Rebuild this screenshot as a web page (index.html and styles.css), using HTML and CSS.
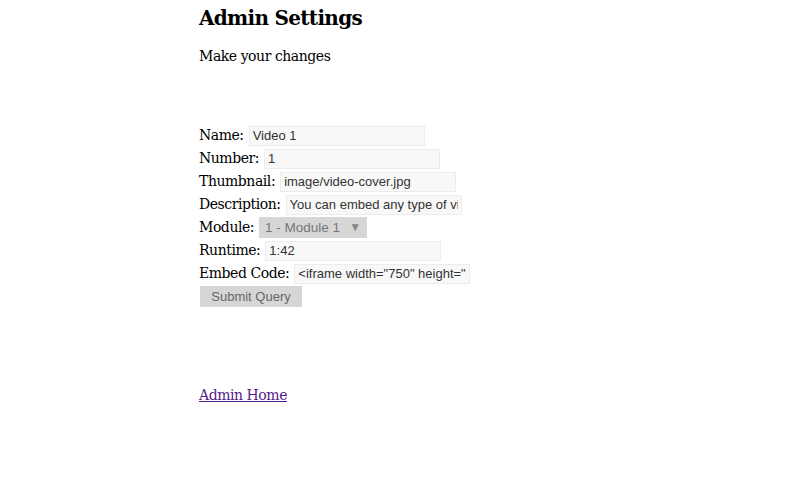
FILE: index.html
```html
<!DOCTYPE html>
<html>
<head>
<meta charset="utf-8">
<link rel="stylesheet" href="styles.css">
</head>
<body>
<div class="page">
  <h1 class="title">Admin Settings</h1>
  <p class="lead">Make your changes</p>
  <form class="form">
    <div class="row"><label>Name:</label> <input class="field" type="text" value="Video 1"></div>
    <div class="row"><label>Number:</label> <input class="field" type="text" value="1"></div>
    <div class="row"><label>Thumbnail:</label> <input class="field" type="text" value="image/video-cover.jpg"></div>
    <div class="row"><label>Description:</label> <input class="field" type="text" value="You can embed any type of video"></div>
    <div class="row"><label>Module:</label> <span class="select"><span class="select-text">1 - Module 1</span><span class="arrow">▼</span></span></div>
    <div class="row"><label>Runtime:</label> <input class="field" type="text" value="1:42"></div>
    <div class="row"><label>Embed Code:</label> <input class="field" type="text" value="&lt;iframe width=&quot;750&quot; height=&quot;422&quot;"></div>
    <div class="row-btn"><button class="submit" type="button">Submit Query</button></div>
  </form>
  <a class="home" href="#">Admin Home</a>
</div>
</body>
</html>
```
FILE: styles.css
```css
html, body { margin: 0; padding: 0; background: #fff; }
body { font-family: "DejaVu Serif", serif; font-size: 14px; color: #000; letter-spacing: -0.45px; }
.page { width: 392px; margin: 0 auto; }
.title { font-size: 20px; line-height: 26px; margin: 0; padding-top: 5px; font-weight: bold; letter-spacing: -0.7px; }
.lead { margin: 15px 0 0; line-height: 20px; }
.form { margin-top: 58px; }
.row { height: 23px; line-height: 23px; display: flex; align-items: center; white-space: nowrap; }
.row label { margin-right: 5px; }
.field { box-sizing: border-box; width: 176px; height: 20px; border: 1px solid #ececec; background: #f8f8f8; font-family: "Liberation Sans", sans-serif; font-size: 13px; letter-spacing: 0; color: #333; padding: 0 3px; margin: 0; outline: none; }
.select { box-sizing: border-box; width: 108px; height: 21px; background: #d6d6d6; color: #777; font-family: "Liberation Sans", sans-serif; font-size: 13.5px; letter-spacing: 0; display: flex; align-items: center; justify-content: space-between; padding: 0 6px 0 6px; }
.arrow { font-size: 12px; color: #888; }
.row-btn { height: 23px; display: flex; align-items: center; }
.submit { box-sizing: border-box; width: 102px; height: 21px; margin-left: 1px; border: 0; background: #d6d6d6; color: #666; font-family: "Liberation Sans", sans-serif; font-size: 13px; letter-spacing: 0; padding: 0; }
.home { display: block; margin-top: 77px; line-height: 20px; color: #551a8b; width: max-content; }
```
